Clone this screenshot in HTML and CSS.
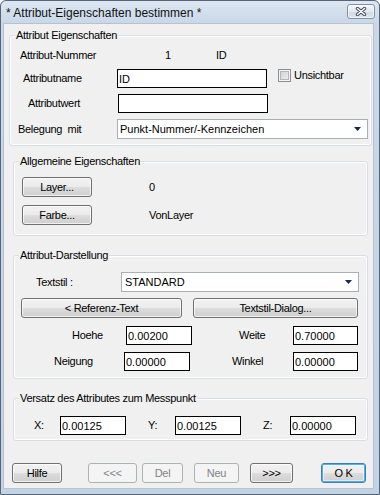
FILE: index.html
```html
<!DOCTYPE html>
<html lang="de">
<head>
    <meta charset="utf-8">
    <title>Attribut-Eigenschaften bestimmen</title>
    <link rel="stylesheet" href="styles.css">
</head>
<body>
    <div class="window">
        <div class="titlebar">
            <span class="title">* Attribut-Eigenschaften bestimmen *</span>
            <div class="close-btn">
                <svg width="12" height="9" viewBox="0 0 12 9">
                    <path d="M2.5 1.5 L9.5 7.5 M9.5 1.5 L2.5 7.5" stroke="#3a4758" stroke-width="3.4" stroke-linecap="round"/>
                    <path d="M2.5 1.5 L9.5 7.5 M9.5 1.5 L2.5 7.5" stroke="#fff" stroke-width="1.6" stroke-linecap="round"/>
                </svg>
            </div>
        </div>
        <div class="client">
            <fieldset class="group group-main">
                <legend>Attribut Eigenschaften</legend>
                <div class="row row-num">
                    <span class="lbl num-lbl">Attribut-Nummer</span>
                    <span class="lbl num-val">1</span>
                    <span class="lbl">ID</span>
                </div>
                <div class="row row-name">
                    <span class="lbl name-lbl">Attributname</span>
                    <input class="field wide-field" type="text" value="ID">
                    <label class="check"><span class="box"></span><span class="lbl">Unsichtbar</span></label>
                </div>
                <div class="row row-value">
                    <span class="lbl value-lbl">Attributwert</span>
                    <input class="field wide-field" type="text" value="">
                </div>
                <div class="row row-use">
                    <span class="lbl use-lbl">Belegung&nbsp; mit</span>
                    <div class="combo use-combo">
                        <span>Punkt-Nummer/-Kennzeichen</span>
                        <svg width="7" height="4" viewBox="0 0 7 4"><path d="M0 0 H7 L3.5 4 Z" fill="#132a56"/></svg>
                    </div>
                </div>
            </fieldset>

            <fieldset class="group">
                <legend>Allgemeine Eigenschaften</legend>
                <div class="row row-layer">
                    <button class="btn layer-btn">Layer...</button>
                    <span class="lbl prop-val">0</span>
                </div>
                <div class="row row-color">
                    <button class="btn layer-btn">Farbe...</button>
                    <span class="lbl prop-val">VonLayer</span>
                </div>
            </fieldset>

            <fieldset class="group group-display">
                <legend>Attribut-Darstellung</legend>
                <div class="row row-style">
                    <span class="lbl style-lbl">Textstil :</span>
                    <div class="combo style-combo">
                        <span>STANDARD</span>
                        <svg width="7" height="4" viewBox="0 0 7 4"><path d="M0 0 H7 L3.5 4 Z" fill="#132a56"/></svg>
                    </div>
                </div>
                <div class="row row-btns">
                    <button class="btn ref-btn">&lt; Referenz-Text</button>
                    <button class="btn dlg-btn">Textstil-Dialog...</button>
                </div>
                <div class="row row-height">
                    <span class="lbl height-lbl">Hoehe</span>
                    <input class="field num-field" type="text" value="0.00200">
                    <span class="lbl width-lbl">Weite</span>
                    <input class="field num-field right-field" type="text" value="0.70000">
                </div>
                <div class="row row-slant">
                    <span class="lbl slant-lbl">Neigung</span>
                    <input class="field num-field" type="text" value="0.00000">
                    <span class="lbl angle-lbl">Winkel</span>
                    <input class="field num-field right-field" type="text" value="0.00000">
                </div>
            </fieldset>

            <fieldset class="group group-offset">
                <legend>Versatz des Attributes zum Messpunkt</legend>
                <div class="row row-xyz">
                    <span class="lbl x-lbl">X:</span>
                    <input class="field num-field" type="text" value="0.00125">
                    <span class="lbl y-lbl">Y:</span>
                    <input class="field num-field" type="text" value="0.00125">
                    <span class="lbl y-lbl">Z:</span>
                    <input class="field num-field" type="text" value="0.00000">
                </div>
            </fieldset>

            <div class="row bottom-bar">
                <button class="btn help-btn">Hilfe</button>
                <button class="btn prev-btn" disabled>&lt;&lt;&lt;</button>
                <button class="btn del-btn" disabled>Del</button>
                <button class="btn new-btn" disabled>Neu</button>
                <button class="btn next-btn">&gt;&gt;&gt;</button>
                <button class="btn ok-btn">O K</button>
            </div>
        </div>
    </div>
</body>
</html>
```

FILE: styles.css
```css
* {
    box-sizing: border-box;
}
body {
    margin: 0;
    font-family: "Liberation Sans", Arial, sans-serif;
    font-size: 11px;
    color: #000;
}
.window {
    width: 380px;
    height: 495px;
    border: 1px solid #56657a;
    border-radius: 6px 6px 0 0;
    background: linear-gradient(#dde7f2, #c9d7e7 22px, #c4d3e4);
    display: flex;
    flex-direction: column;
}
.titlebar {
    height: 22px;
    display: flex;
    justify-content: space-between;
    align-items: flex-start;
}
.title {
    margin: 5px 0 0 5px;
    font-size: 12px;
    line-height: 15px;
    color: #111;
}
.close-btn {
    width: 28px;
    height: 15px;
    margin: 3px 4px 0 0;
    border: 1px solid #8190a6;
    border-radius: 3px;
    background: linear-gradient(#f3f6fa, #e2e9f1 50%, #d0dae6 51%, #dde5ee);
    box-shadow: inset 0 0 0 1px rgba(255, 255, 255, 0.6);
    display: flex;
    align-items: center;
    justify-content: center;
}
.client {
    flex: 1;
    margin: 0 5px 5px 2px;
    background: #f0f0f0;
    border: 1px solid #b4c2d2;
}

/* group boxes */
.group {
    margin: 13px 0 0 9px;
    padding: 0;
    width: 355px;
    min-width: 0;
    border: 1px solid #d5dfe5;
    border-radius: 3px;
    box-shadow: inset 0 0 0 1px #fff;
}
.group legend {
    margin-left: 5px;
    padding: 0 1px;
    line-height: 13px;
    letter-spacing: -0.3px;
    background: #f0f0f0;
}
.group-main {
    margin: 5px 0 0 5px;
    width: 363px;
    padding-bottom: 6px;
}
.group:nth-of-type(2) {
    margin-top: 9px;
    padding-bottom: 10px;
}
.group-display {
    padding-bottom: 7px;
}
.group-offset {
    padding-bottom: 5px;
}

.row {
    display: flex;
    align-items: center;
}
.lbl {
    line-height: 13px;
    letter-spacing: -0.3px;
    white-space: nowrap;
}

/* group 1 */
.row-num { margin-top: 6px; height: 14px; }
.num-lbl { margin-left: 10px; width: 145px; }
.num-val { width: 51px; }
.row-name { margin-top: 7px; height: 19px; }
.name-lbl { margin-left: 13px; width: 94px; }
.row-value { margin-top: 6px; height: 19px; }
.value-lbl { margin-left: 18px; width: 90px; }
.row-use { margin-top: 6px; height: 20px; }
.use-lbl { margin-left: 8px; width: 99px; }

.field {
    height: 19px;
    margin: 0;
    padding: 0 1px;
    border: 1px solid #000;
    background: #fff;
    font-family: "Liberation Sans", Arial, sans-serif;
    font-size: 11px;
    color: #000;
    outline: none;
}
.wide-field { width: 150px; }
.num-field { width: 66px; }
.right-field { width: 65px; }

.check {
    align-self: flex-start;
    margin-left: 11px;
    display: flex;
    align-items: center;
}
.box {
    width: 13px;
    height: 13px;
    margin-right: 3px;
    border: 1px solid #8e8f8f;
    background: linear-gradient(135deg, #c9cdd2, #f3f4f5);
    box-shadow: inset 0 0 0 1px #f4f4f4, inset 0 0 0 2px #b3b7bc;
}

.combo {
    height: 20px;
    border: 1px solid #a9afb7;
    background: #fff;
    display: flex;
    align-items: center;
    justify-content: space-between;
    padding: 0 6px 0 2px;
}
.use-combo { width: 251px; }
.style-combo { width: 238px; padding-left: 3px; }

/* buttons */
.btn {
    height: 20px;
    margin: 0;
    padding: 0;
    border: 1px solid #707070;
    border-radius: 3px;
    background: linear-gradient(#f2f2f2, #ebebeb 50%, #dddddd 51%, #cfcfcf);
    box-shadow: inset 0 0 0 1px rgba(255, 255, 255, 0.7);
    font-family: "Liberation Sans", Arial, sans-serif;
    font-size: 11px;
    letter-spacing: -0.3px;
    color: #000;
}
.btn:disabled {
    border-color: #adb2b5;
    background: #f4f4f4;
    box-shadow: none;
    color: #838383;
}

/* group 2 */
.row-layer { margin-top: 9px; height: 20px; }
.row-color { margin-top: 8px; height: 20px; }
.layer-btn { margin-left: 8px; width: 70px; }
.prop-val { margin-left: 57px; }

/* group 3 */
.row-style { margin-top: 10px; height: 20px; }
.style-lbl { margin-left: 22px; width: 85px; }
.row-btns { margin-top: 6px; height: 20px; }
.ref-btn { margin-left: 7px; width: 161px; }
.dlg-btn { margin-left: 11px; width: 165px; }
.row-height { margin-top: 8px; height: 19px; }
.height-lbl { margin-left: 58px; width: 54px; }
.width-lbl { margin-left: 47px; width: 54px; }
.row-slant { margin-top: 7px; height: 19px; }
.slant-lbl { margin-left: 40px; width: 70px; }
.angle-lbl { margin-left: 42px; width: 61px; }

/* group 4 */
.row-xyz { margin-top: 11px; height: 19px; }
.x-lbl { margin-left: 20px; width: 26px; }
.y-lbl { margin-left: 22px; width: 27px; }

/* bottom buttons */
.bottom-bar { margin-top: 22px; height: 20px; }
.help-btn { margin-left: 8px; width: 50px; }
.prev-btn { margin-left: 26px; width: 49px; }
.del-btn { margin-left: 5px; width: 41px; }
.new-btn { margin-left: 11px; width: 45px; }
.next-btn { margin-left: 11px; width: 43px; }
.ok-btn {
    margin-left: 28px;
    width: 45px;
    border-color: #3c7fb1;
    box-shadow: inset 0 0 0 1px #48b2ea, inset 0 0 0 2px rgba(255, 255, 255, 0.5);
}
```
